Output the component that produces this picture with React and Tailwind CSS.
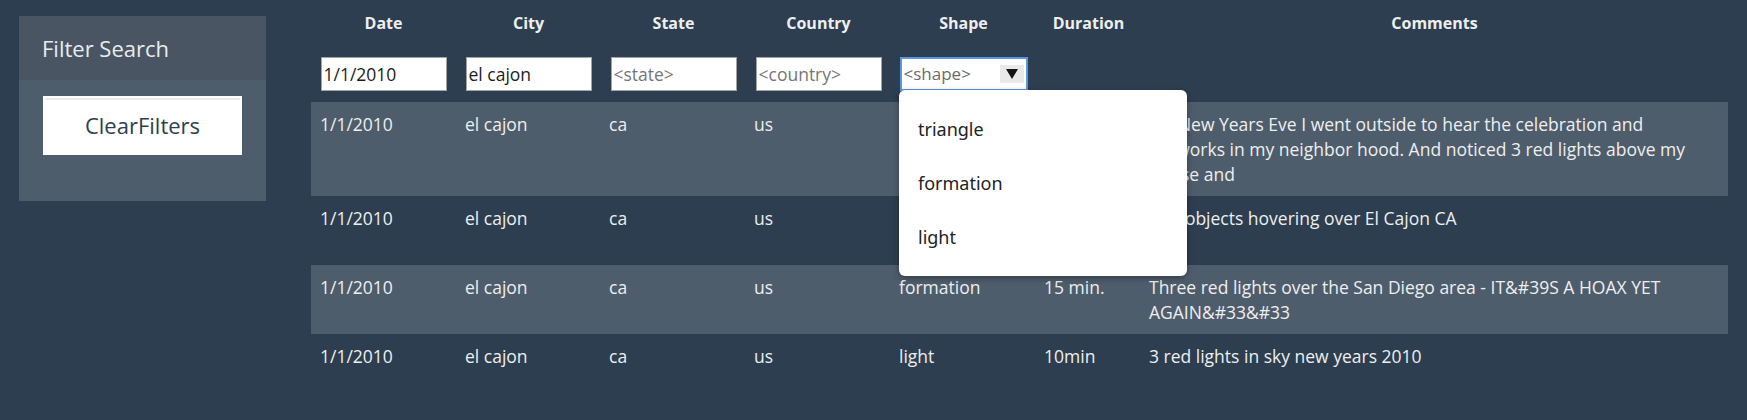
import { useState } from 'react';

const sightings = [
  {
    date: '1/1/2010',
    city: 'el cajon',
    state: 'ca',
    country: 'us',
    shape: 'triangle',
    duration: '5 minutes',
    comments:
      'On New Years Eve I went outside to hear the celebration and fireworks in my neighbor hood. And noticed 3 red lights above my house and',
  },
  {
    date: '1/1/2010',
    city: 'el cajon',
    state: 'ca',
    country: 'us',
    shape: 'formation',
    duration: '1 - 2 minutes',
    comments: 'Red objects hovering over El Cajon CA',
  },
  {
    date: '1/1/2010',
    city: 'el cajon',
    state: 'ca',
    country: 'us',
    shape: 'formation',
    duration: '15 min.',
    comments: 'Three red lights over the San Diego area - IT&#39S A HOAX YET AGAIN&#33&#33',
  },
  {
    date: '1/1/2010',
    city: 'el cajon',
    state: 'ca',
    country: 'us',
    shape: 'light',
    duration: '10min',
    comments: '3 red lights in sky new years 2010',
  },
];

const shapes = ['triangle', 'formation', 'light'];

// columns: date, city, state, country, shape, duration, comments
const cols = 'grid grid-cols-[145px_145px_145px_145px_145px_105px_587px]';

const FilterInput = ({ value, placeholder }) => (
  <input
    className="w-[126px] h-[34px] border border-[#a3a3a3] bg-white px-[2px] text-[17.5px] text-[#1c1c1c] placeholder:text-[#767676] outline-none"
    defaultValue={value}
    placeholder={placeholder}
  />
);

const App = () => {
  const [open, setOpen] = useState(true);

  return (
    <div className="min-h-[420px] bg-[#2c3e50] font-['Open_Sans','Liberation_Sans',sans-serif] text-[#eeeeee] flex items-start">
      <aside className="ml-[19px] mt-[16px] w-[247px] shrink-0">
        <div className="h-[64px] bg-[#4a5563] flex items-center pl-[23px] text-[22px] text-[#e8ecef]">
          Filter Search
        </div>
        <div className="h-[121px] bg-[#4e5d6c] pt-[16px] pl-[24px]">
          <button className="w-[199px] h-[59px] bg-white border-2 border-white shadow-[inset_0_2px_0_#ececec] text-[22px] text-[#2c3e50]">
            ClearFilters
          </button>
        </div>
      </aside>

      <main className="ml-[45px] w-[1417px]">
        <div className={`${cols} pt-[11px] font-bold text-[16px] leading-[24px]`}>
          {['Date', 'City', 'State', 'Country', 'Shape', 'Duration', 'Comments'].map((h) => (
            <div key={h} className="text-center">
              {h}
            </div>
          ))}
        </div>

        <div className={`${cols} mt-[22px] h-[45px] items-start`}>
          <div className="flex justify-center">
            <FilterInput value="1/1/2010" />
          </div>
          <div className="flex justify-center">
            <FilterInput value="el cajon" />
          </div>
          <div className="flex justify-center">
            <FilterInput placeholder="<state>" />
          </div>
          <div className="flex justify-center">
            <FilterInput placeholder="<country>" />
          </div>
          <div className="flex justify-center relative">
            <button
              onClick={() => setOpen(!open)}
              className="w-[128px] h-[34px] border-2 border-[#5b96e6] bg-white flex items-center justify-between pl-[2px] pr-[2px] text-[17px] text-[#6b6b6b]"
            >
              <span>&lt;shape&gt;</span>
              <span className="w-[24px] h-[18px] bg-[#e9e9e9] flex items-center justify-center">
                <svg width="12" height="10" viewBox="0 0 12 10">
                  <polygon points="0,0 12,0 6,10" fill="#141414" />
                </svg>
              </span>
            </button>
            {open && (
              <ul className="absolute left-[8px] top-[33px] z-10 w-[288px] h-[186px] rounded-[6px] bg-white shadow-[0_2px_6px_rgba(0,0,0,0.35)] pt-[12px] font-['Noto_Sans','Open_Sans',sans-serif] text-[18px] text-[#222]">
                {shapes.map((s) => (
                  <li key={s} className="h-[54px] pl-[19px] flex items-center">
                    {s}
                  </li>
                ))}
              </ul>
            )}
          </div>
        </div>

        <div className="text-[17.5px] leading-[25px]">
          {sightings.map((s, i) => (
            <div key={i} className={`${cols} pt-[10px] pb-[9px] ${i % 2 === 0 ? 'bg-[#4e5d6c]' : ''}`}>
              <div className="pl-[9px]">{s.date}</div>
              <div className="pl-[9px]">{s.city}</div>
              <div className="pl-[8px]">{s.state}</div>
              <div className="pl-[8px]">{s.country}</div>
              <div className="pl-[8px]">{s.shape}</div>
              <div className="pl-[8px] pr-[8px]">{s.duration}</div>
              <div className="pl-[8px] pr-[24px]">{s.comments}</div>
            </div>
          ))}
        </div>
      </main>
    </div>
  );
};

export default App;
